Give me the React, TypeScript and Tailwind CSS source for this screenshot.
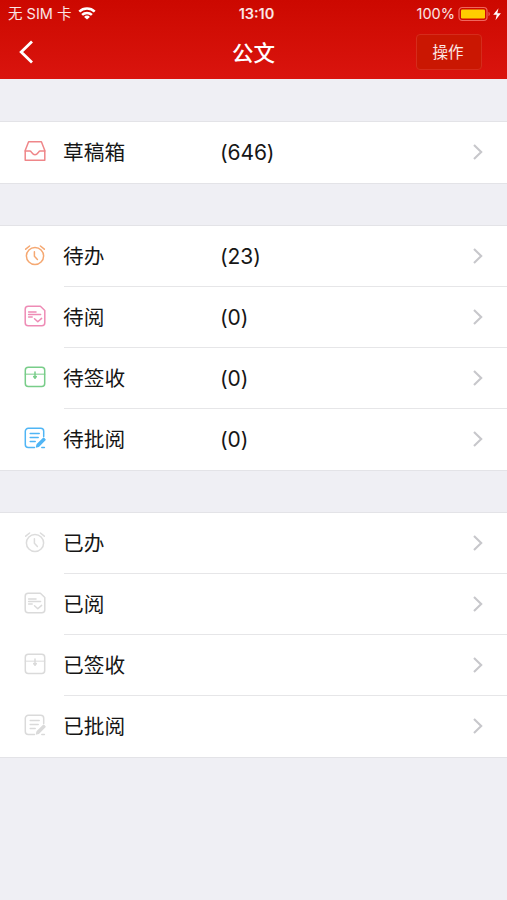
import type { ReactNode } from 'react';

type IconName = 'inbox' | 'clock' | 'read' | 'sign' | 'review';

const shapes: Record<IconName, ReactNode> = {
  inbox: (
    <>
      <path d="M2.2 11.5 5.6 2.8h12.8l3.4 8.7v9.7H2.2Z" />
      <path d="M2.2 12h4.6c1 0 1.3.6 1.7 1.2 1 1.4 2.3 2.6 3.5 2.6s2.500-1.200 3.500-2.600c.4-.6.7-1.200 1.700-1.200h4.600" />
    </>
  ),
  clock: (
    <>
      <circle cx="12" cy="13" r="8.600" />
      <path d="M2.700 6.200 6.600 3M21.300 6.200 17.400 3M11.400 8.700v4.600l3 3.200" />
    </>
  ),
  read: (
    <>
      <path d="M5.200 2.300h12.200l4.400 4.200v12.300a3 3 0 0 1-3 3H5.200a3 3 0 0 1-3-3V5.300a3 3 0 0 1 3-3Z" />
      <path d="M5.600 7.900h7.400M5.600 10.400h12M5.600 12.900h3.600M11.500 14.800l3.300 3 3.800-3.400" />
    </>
  ),
  sign: (
    <>
      <rect x="2.300" y="2.300" width="19.400" height="19.200" rx="3" />
      <path d="M2.300 9.300h19.400" strokeOpacity=".65" />
      <path d="M12 7v6.300M10.700 11.600l1.300 1.700 1.300-1.700" />
    </>
  ),
  review: (
    <>
      <path d="M20.700 10.500V5.300a3 3 0 0 0-3-3H5.300a3 3 0 0 0-3 3v13.200a3 3 0 0 0 3 3h6.200" />
      <path d="M7.200 7.600h9M7.200 11.600h8M7.200 15.600h5" />
      <path d="m13.600 20.900.6-2.300 6.400-6.300 1.400 1.400-6.400 6.600ZM18.800 21.400h2.600" />
      <path d="m14.500 19.900 6.500-6.500" strokeWidth="1.600" />
    </>
  ),
};

function Icon({ name, className }: { name: IconName; className: string }) {
  return (
    <svg
      viewBox="0 0 24 24"
      className={`ml-[23px] size-6 shrink-0 -mt-[3px] ${className}`}
      fill="none"
      stroke="currentColor"
      strokeWidth="1.5"
      strokeLinejoin="round"
      strokeLinecap="round"
    >
      {shapes[name]}
    </svg>
  );
}

interface Item {
  icon: IconName;
  label: string;
  count?: string;
  color: string;
}

const groups: Item[][] = [
  [{ icon: 'inbox', label: '草稿箱', count: '(646)', color: 'text-[#ef8689]' }],
  [
    { icon: 'clock', label: '待办', count: '(23)', color: 'text-[#f5a872]' },
    { icon: 'read', label: '待阅', count: '(0)', color: 'text-[#ee8bb5]' },
    { icon: 'sign', label: '待签收', count: '(0)', color: 'text-[#78cd89]' },
    { icon: 'review', label: '待批阅', count: '(0)', color: 'text-[#4fb5f5]' },
  ],
  [
    { icon: 'clock', label: '已办', color: 'text-[#dcdcdc]' },
    { icon: 'read', label: '已阅', color: 'text-[#dadada]' },
    { icon: 'sign', label: '已签收', color: 'text-[#dadada]' },
    { icon: 'review', label: '已批阅', color: 'text-[#dadada]' },
  ],
];

function Row({ item, last }: { item: Item; last: boolean }) {
  return (
    <li className="flex h-[61px] items-center">
      <Icon name={item.icon} className={item.color} />
      <div
        className={`ml-[17px] flex h-full grow items-center border-b text-[#161616] ${last ? 'border-transparent' : 'border-[#e6e6e8]'}`}
      >
        <span className="-ml-px w-[157px] pt-[3px] text-[20.7px] leading-none">{item.label}</span>
        <span className="grow pt-px text-[21px] leading-none tracking-[-0.1px]">{item.count}</span>
        <svg
          viewBox="0 0 12 18"
          className="mr-[23px] h-[18px] w-3 shrink-0"
          fill="none"
          stroke="#c7c7cb"
          strokeWidth="2.1"
        >
          <path d="m2 2 7.200 7L2 16" />
        </svg>
      </div>
    </li>
  );
}

function StatusBar() {
  return (
    <div className="grid h-7 grid-cols-3 items-center pl-2 pr-[5px] text-[14.5px] leading-none text-white/90">
      <div className="flex items-center gap-[7px]">
        <span className="whitespace-nowrap pt-px">无 SIM 卡</span>
        <svg viewBox="0 0 18 14" className="h-[14px] w-[18px] -mt-[3px]" fill="none" stroke="#fff" strokeWidth="2.600">
          <path d="M1.300 5.600a11.200 11.200 0 0 1 15.400 0M4.100 8.900a7.200 7.200 0 0 1 9.800 0" />
          <path d="M9 13.600 6.100 10.900a3.900 3.900 0 0 1 5.800 0Z" fill="#fff" stroke="none" />
        </svg>
      </div>
      <span className="pl-[3px] text-center text-[14.5px] font-semibold">13:10</span>
      <div className="flex items-center justify-end">
        <span className="mr-[3px]">100%</span>
        <svg viewBox="0 0 44 16" className="-mt-px h-4 w-11" fill="none">
          <rect x="1" y="1.500" width="28" height="13" rx="3.200" stroke="#f0675e" strokeWidth="1.200" />
          <rect x="3" y="3.500" width="24" height="9" rx="1.300" fill="#ffcc00" />
          <path d="M30.500 5.800c1.800.7 1.800 3.700 0 4.400Z" fill="#f0675e" />
          <path d="M40.500 2.300 35.200 8.800h3.500l-1.200 5.400 5.400-7h-3.600Z" fill="#fff" />
        </svg>
      </div>
    </div>
  );
}

export default function App() {
  return (
    <main className="min-h-[900px] w-full bg-[#efeff4] font-[Inter,'Noto_Sans_CJK_SC',sans-serif]">
      <header className="h-[79px] bg-linear-to-b from-[#cc0800] to-[#da140e] text-white">
        <StatusBar />
        <div className="grid h-[48px] grid-cols-3 items-center">
          <svg viewBox="0 0 16 26" className="ml-[18px] h-[26px] w-4" fill="none" stroke="#fff" strokeWidth="2.800">
            <path d="M14 2.500 3.200 13 14 23.500" />
          </svg>
          <h1 className="pt-[3px] text-center text-[21.5px] font-medium leading-none">公文</h1>
          <button className="mr-[25px] h-9 w-[66px] justify-self-end rounded-[4px] border border-[#d52c1c] bg-[#ca1702] pt-0.5 pr-0.5 text-[15.5px] leading-none text-white/90">
            操作
          </button>
        </div>
      </header>
      <div className="flex flex-col gap-[42px] pt-[42px]">
        {groups.map((items, index) => (
          <ul key={index} className="border-t border-[#e3e3e7] bg-white shadow-[0_1px_0_#e3e3e7]">
            {items.map((item, i) => (
              <Row key={item.label} item={item} last={i === items.length - 1} />
            ))}
          </ul>
        ))}
      </div>
    </main>
  );
}
